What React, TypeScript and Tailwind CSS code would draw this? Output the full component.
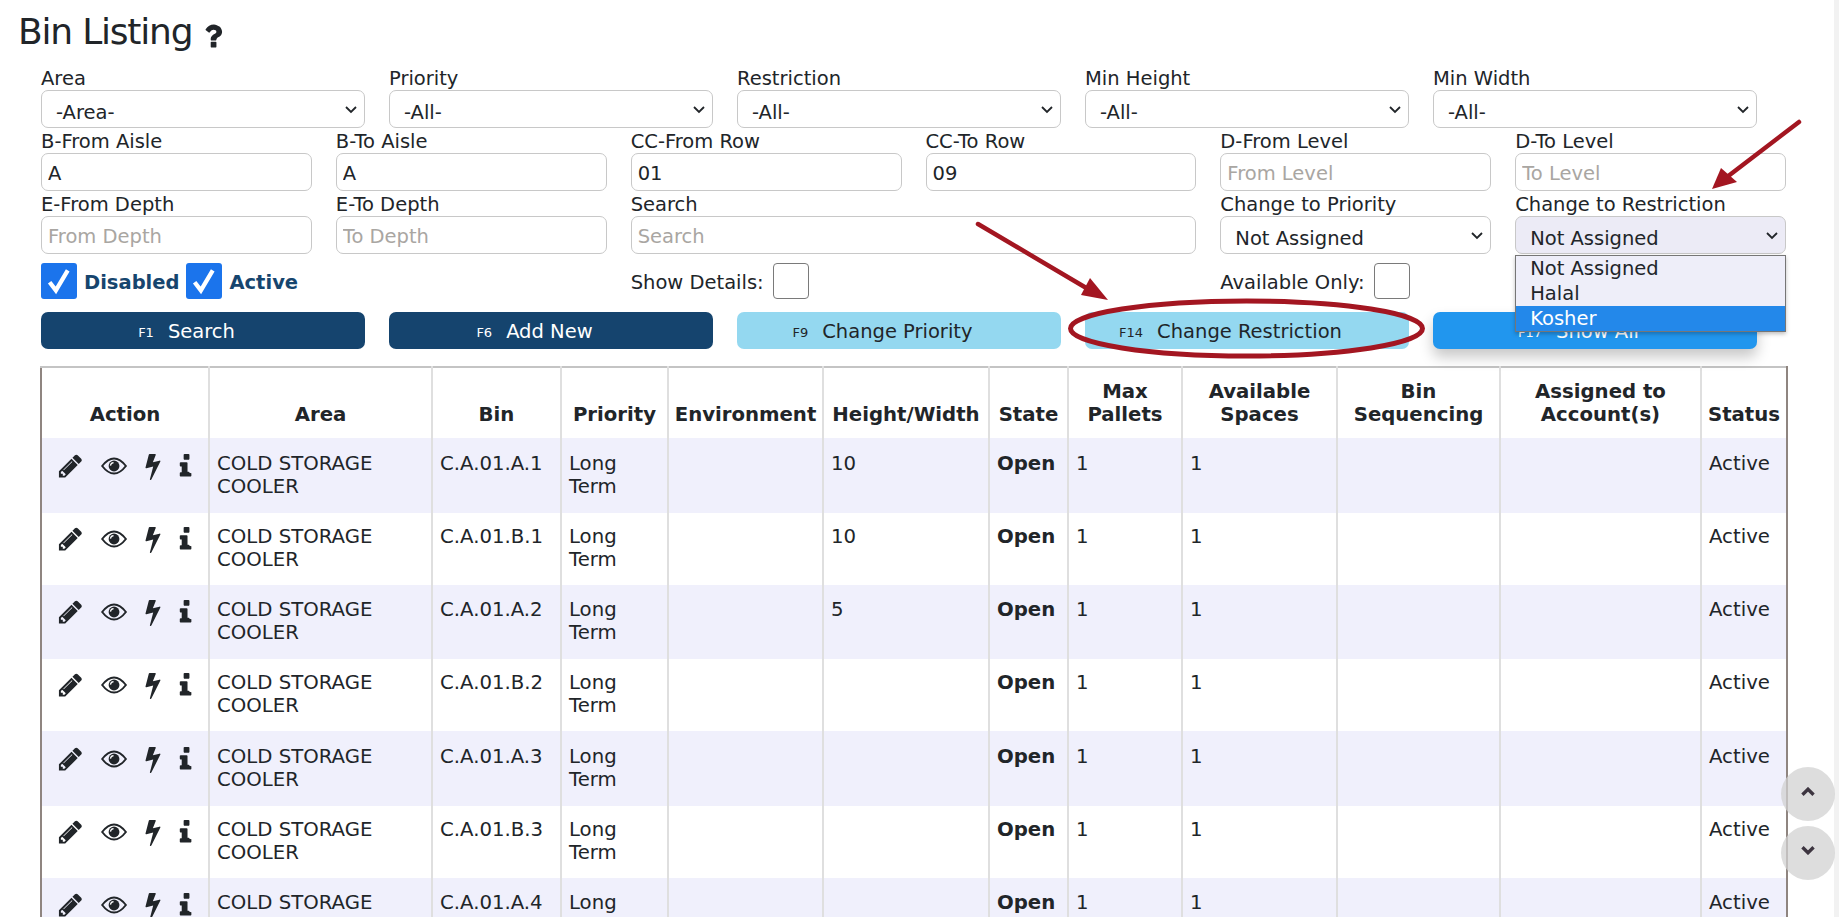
import type { ReactNode } from "react";

const PENCIL = "M491 1536l91-91-235-235-91 91v107h128v128h107zm523-928q0-22-22-22-10 0-17 7l-542 542q-7 7-7 17 0 22 22 22 10 0 17-7l542-542q7-7 7-17zm-54-192l416 416-832 832h-416v-416zm683 96q0 53-37 90l-166 166-416-416 166-165q36-38 90-38 53 0 91 38l235 234q37 39 37 91z";
const BOLT = "M1333 566q18 20 7 44l-540 1157q-13 25-42 25-4 0-14-2-17-5-25.5-19t-4.5-30l197-808-406 101q-4 1-12 1-18 0-31-11-18-15-13-39l201-825q4-14 16-23t28-9h328q19 0 32 12.5t13 29.5q0 8-5 18l-171 463 396-98q8-2 12-2 19 0 34 15z";
const INFO = "M1152 1376v160q0 26-19 45t-45 19h-640q-26 0-45-19t-19-45v-160q0-26 19-45t45-19h64v-384h-64q-26 0-45-19t-19-45v-160q0-26 19-45t45-19h384q26 0 45 19t19 45v576h64q26 0 45 19t19 45zm-128-1216v256q0 26-19 45t-45 19h-256q-26 0-45-19t-19-45v-256q0-26 19-45t45-19h256q26 0 45 19t19 45z";
const QUESTION = "M1088 1256v240q0 16-12 28t-28 12h-240q-16 0-28-12t-12-28v-240q0-16 12-28t28-12h240q16 0 28 12t12 28zm316-600q0 54-15.5 101t-35 76.5-55 59.5-57.5 43.5-61 35.5q-41 23-68.5 65t-27.5 67q0 17-12 32.5t-28 15.5h-240q-15 0-25.5-18.5t-10.5-37.5v-45q0-83 65-156.5t143-108.5q59-27 84-56t25-76q0-42-46.5-74t-107.5-32q-65 0-108 29-35 25-107 115-13 16-31 16-12 0-25-8l-164-125q-13-10-15.5-25t5.5-28q160-266 464-266 80 0 161 31t146 83 106 127.5 41 158.5z";

function Fa({ d, className, stretch }: { d: string; className?: string; stretch?: boolean }) {
  return (
    <svg viewBox="0 0 1792 1792" className={className} fill="currentColor" preserveAspectRatio={stretch ? "none" : undefined}>
      <path d={d} />
    </svg>
  );
}

function EyeIcon({ className }: { className?: string }) {
  return (
    <svg viewBox="0 0 27 18" className={className}>
      <path d="M1.2 9C5.5 3.4 9.5 1.2 13.5 1.2S21.5 3.4 25.8 9C21.5 14.6 17.5 16.8 13.5 16.8S5.5 14.6 1.2 9Z" fill="none" stroke="currentColor" strokeWidth="2" />
      <circle cx="13.5" cy="9" r="5.6" fill="currentColor" />
      <path d="M9.8 8.6C10 6.9 11.2 5.6 13 5.4" fill="none" stroke="white" strokeWidth="1.3" />
    </svg>
  );
}

function Chevron({ className, bold }: { className?: string; bold?: boolean }) {
  return (
    <svg viewBox="0 0 14 9" className={className} fill="none" stroke="currentColor" strokeWidth={bold ? 3 : 1.8}>
      <path d="M2 2l5 5 5-5" />
    </svg>
  );
}

const inputClass =
  "h-[38px] w-full rounded-[7px] border border-[#c8c8c8] bg-white px-[6px] pt-[2px] text-[#212529] outline-none placeholder:text-[#a9a6a2]";

function Label({ children }: { children: ReactNode }) {
  return <label className="block h-[25px] leading-[27px] text-[#212529]">{children}</label>;
}

function SelectField({ label, value, focused, children }: { label: string; value: string; focused?: boolean; children?: ReactNode }) {
  return (
    <div className="relative">
      <Label>{label}</Label>
      <div className="relative">
        <select
          defaultValue={value}
          className={`h-[38px] w-full appearance-none rounded-[7px] border border-[#c8c8c8] pl-[14px] pt-[7px] text-[#212529] outline-none ${focused ? "bg-[#ecebf6]" : "bg-white"}`}
        >
          <option>{value}</option>
        </select>
        <Chevron className="pointer-events-none absolute right-[7px] top-[15px] h-[9px] w-[14px] text-[#212529]" />
      </div>
      {children}
    </div>
  );
}

function InputField({ label, value, placeholder, className }: { label: string; value?: string; placeholder?: string; className?: string }) {
  return (
    <div className={className}>
      <Label>{label}</Label>
      <input defaultValue={value} placeholder={placeholder} className={inputClass} />
    </div>
  );
}

function BlueCheck({ label }: { label: string }) {
  return (
    <label className="flex items-center">
      <span className="flex h-[36px] w-[36px] items-center justify-center rounded-[3px] bg-[#1b74ec]">
        <svg viewBox="0 0 24 24" className="h-[30px] w-[30px]" fill="none" stroke="white" strokeWidth="3.4">
          <path d="M4.5 13l5 6.5L19 3.5" />
        </svg>
      </span>
      <span className="ml-[7px] pt-[3px] font-bold text-[#16456e]">{label}</span>
    </label>
  );
}

function EmptyCheck({ label }: { label: string }) {
  return (
    <label className="flex items-center gap-[9px] text-[#212529]">
      <span className="pt-[3px]">{label}</span>
      <span className="h-[36px] w-[36px] rounded-[4px] border border-[#7a7a7a] bg-white" />
    </label>
  );
}

function ActionButton({ fkey, label, className }: { fkey: string; label: string; className: string }) {
  return (
    <button type="button" className={`flex h-[37px] items-center justify-center rounded-[7px] pr-[33px] pt-[2px] ${className}`}>
      <span className="mr-[14px] pt-[3px] text-[13px]">{fkey}</span>
      <span>{label}</span>
    </button>
  );
}

const columns = [
  { head: ["Action"], w: "w-[168px]" },
  { head: ["Area"], w: "w-[223px]" },
  { head: ["Bin"], w: "w-[129px]" },
  { head: ["Priority"], w: "w-[107px]" },
  { head: ["Environment"], w: "w-[155px]" },
  { head: ["Height/Width"], w: "w-[166px]" },
  { head: ["State"], w: "w-[79px]" },
  { head: ["Max", "Pallets"], w: "w-[114px]" },
  { head: ["Available", "Spaces"], w: "w-[155px]" },
  { head: ["Bin", "Sequencing"], w: "w-[163px]" },
  { head: ["Assigned to", "Account(s)"], w: "w-[201px]" },
  { head: ["Status"], w: "w-[86px]" },
];

const rows = [
  { bin: "C.A.01.A.1", hw: "10" },
  { bin: "C.A.01.B.1", hw: "10" },
  { bin: "C.A.01.A.2", hw: "5" },
  { bin: "C.A.01.B.2", hw: "" },
  { bin: "C.A.01.A.3", hw: "" },
  { bin: "C.A.01.B.3", hw: "" },
  { bin: "C.A.01.A.4", hw: "" },
];

const cell = "border-r-2 border-[#dfdfdf] px-[7px] align-top group-odd:pt-[13.5px] group-even:pt-[12px] last:border-r-0";

function BinTable() {
  return (
    <table className="-ml-[1px] mt-[17px] w-[1746px] table-fixed border-x-2 border-t-2 border-x-[#8f8580] border-t-[#c4c4c4] text-[19.7px] leading-[23px] text-[#212529]">
      <colgroup>
        {columns.map((c) => (
          <col key={c.head.join()} className={c.w} />
        ))}
      </colgroup>
      <thead>
        <tr className="h-[71px]">
          {columns.map((c) => (
            <th key={c.head.join()} className="border-r-2 border-[#dfdfdf] pb-[12px] text-center align-bottom font-bold last:border-r-0">
              {c.head.map((line) => (
                <div key={line}>{line}</div>
              ))}
            </th>
          ))}
        </tr>
      </thead>
      <tbody>
        {rows.map((r) => (
          <tr key={r.bin} className="group odd:h-[74.5px] odd:bg-[#f0f0fc] even:h-[72px] even:bg-white">
            <td className={`${cell} !pl-[15px]`}>
              <div className="flex text-[#212529]">
                <Fa d={PENCIL} className="h-[28px] w-[28px]" />
                <EyeIcon className="ml-[17px] mt-[5px] h-[18px] w-[27px]" />
                <Fa d={BOLT} stretch className="ml-[11px] h-[28px] w-[31px]" />
                <Fa d={INFO} className="ml-[6px] h-[28px] w-[28px]" />
              </div>
            </td>
            <td className={cell}>COLD STORAGE<br />COOLER</td>
            <td className={cell}>{r.bin}</td>
            <td className={cell}>Long<br />Term</td>
            <td className={cell}></td>
            <td className={cell}>{r.hw}</td>
            <td className={`${cell} font-bold`}>Open</td>
            <td className={cell}>1</td>
            <td className={cell}>1</td>
            <td className={cell}></td>
            <td className={cell}></td>
            <td className={cell}>Active</td>
          </tr>
        ))}
      </tbody>
    </table>
  );
}

function Annotations() {
  return (
    <svg className="pointer-events-none absolute left-0 top-0 h-[917px] w-[1839px]" viewBox="0 0 1839 917" fill="none">
      <ellipse cx="1246.5" cy="328.5" rx="176" ry="27.5" stroke="#a31621" strokeWidth="5" />
      <path d="M978 224L1088 289" stroke="#a31621" strokeWidth="4.5" strokeLinecap="round" />
      <path d="M1108 300L1090 278L1081 295Z" fill="#a31621" />
      <path d="M1799 122L1727 177" stroke="#a31621" strokeWidth="4.5" strokeLinecap="round" />
      <path d="M1712 189L1721 168L1737 182Z" fill="#a31621" />
    </svg>
  );
}

export default function App() {
  return (
    <div className="relative flex h-[917px] overflow-hidden bg-white font-['DejaVu_Sans',sans-serif] text-[19.5px]">
      <main className="min-w-0 flex-1">
        <div className="flex h-[65px] items-center pl-[18px]">
          <h1 className="pb-[2px] text-[36px] leading-none tracking-[-1.2px] text-[#212529]">Bin Listing</h1>
          <Fa d={QUESTION} className="ml-[5px] mt-[6px] h-[32px] w-[32px] text-[#212529]" />
        </div>

        <div className="pl-[41px]">
          <div className="grid w-[1716px] grid-cols-5 gap-x-[24px]">
            <SelectField label="Area" value="-Area-" />
            <SelectField label="Priority" value="-All-" />
            <SelectField label="Restriction" value="-All-" />
            <SelectField label="Min Height" value="-All-" />
            <SelectField label="Min Width" value="-All-" />
          </div>

          <div className="grid w-[1745px] grid-cols-6 gap-x-[24px]">
            <InputField label="B-From Aisle" value="A" />
            <InputField label="B-To Aisle" value="A" />
            <InputField label="CC-From Row" value="01" />
            <InputField label="CC-To Row" value="09" />
            <InputField label="D-From Level" placeholder="From Level" />
            <InputField label="D-To Level" placeholder="To Level" />

            <InputField label="E-From Depth" placeholder="From Depth" />
            <InputField label="E-To Depth" placeholder="To Depth" />
            <InputField label="Search" placeholder="Search" className="col-span-2" />
            <SelectField label="Change to Priority" value="Not Assigned" />
            <SelectField label="Change to Restriction" value="Not Assigned" focused>
              <ul className="absolute left-0 right-0 top-full z-10 mt-[1px] border border-[#767676] bg-[#eeeef9] shadow-[0_2px_4px_rgba(0,0,0,0.25)]">
                <li className="h-[25px] pl-[14px] leading-[25px] text-[#212529]">Not Assigned</li>
                <li className="h-[25px] pl-[14px] leading-[25px] text-[#212529]">Halal</li>
                <li className="h-[25px] bg-[#2388ea] pl-[14px] leading-[25px] text-white">Kosher</li>
              </ul>
            </SelectField>

            <div className="col-span-2 mt-[9px] flex gap-[7px]">
              <BlueCheck label="Disabled" />
              <BlueCheck label="Active" />
            </div>
            <div className="col-span-2 mt-[9px] flex">
              <EmptyCheck label="Show Details:" />
            </div>
            <div className="col-span-2 mt-[9px] flex">
              <EmptyCheck label="Available Only:" />
            </div>
          </div>

          <div className="mt-[13px] grid w-[1716px] grid-cols-5 gap-x-[24px]">
            <ActionButton fkey="F1" label="Search" className="bg-[#15446e] text-white" />
            <ActionButton fkey="F6" label="Add New" className="bg-[#15446e] text-white" />
            <ActionButton fkey="F9" label="Change Priority" className="bg-[#94d8f0] text-[#212529]" />
            <ActionButton fkey="F14" label="Change Restriction" className="bg-[#94d8f0] text-[#212529]" />
            <ActionButton fkey="F17" label="Show All" className="bg-[#2196ee] text-white shadow-[0_8px_14px_rgba(0,0,0,0.22)]" />
          </div>

          <BinTable />
        </div>
      </main>

      <div className="w-[5px] shrink-0 bg-[#f2f2f2]" />

      <button type="button" className="absolute left-[1781px] top-[767px] flex h-[54px] w-[54px] items-center justify-center rounded-full bg-[#d2d2d2]/75 pb-[5px] text-[#3d3540]">
        <Chevron bold className="h-[10px] w-[16px] rotate-180" />
      </button>
      <button type="button" className="absolute left-[1781px] top-[826px] flex h-[54px] w-[54px] items-center justify-center rounded-full bg-[#d2d2d2]/75 pb-[7px] text-[#3d3540]">
        <Chevron bold className="h-[10px] w-[16px]" />
      </button>

      <Annotations />
    </div>
  );
}
